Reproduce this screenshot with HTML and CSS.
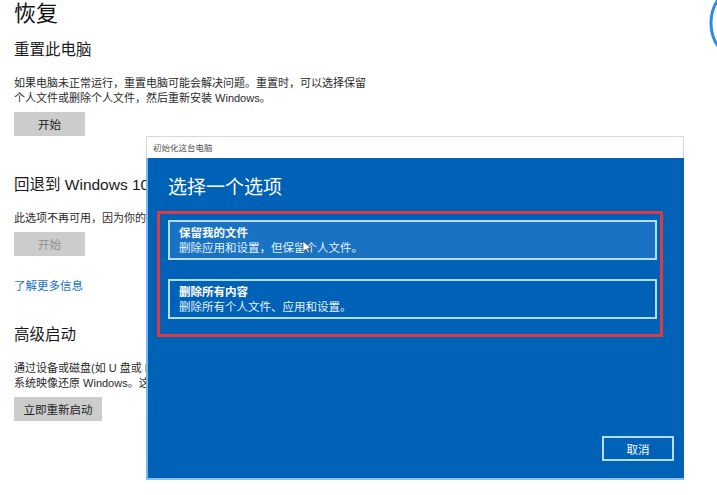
FILE: index.html
```html
<!DOCTYPE html>
<html>
	<head>
		<meta charset="utf-8">
		<title>恢复</title>

		<link rel="stylesheet" href="styles.css">
	</head>
	<body>
		<div class="page">
			<h1 class="title">恢复</h1>

			<h2 class="heading first">重置此电脑</h2>
			<p class="desc">如果电脑未正常运行，重置电脑可能会解决问题。重置时，可以选择保留<br>个人文件或删除个人文件，然后重新安装 Windows。</p>
			<button class="btn">开始</button>

			<h2 class="heading back">回退到 Windows 10</h2>
			<p class="desc">此选项不再可用，因为你的电脑升级时间已超过 10 天。</p>
			<button class="btn disabled">开始</button>

			<a class="more" href="#">了解更多信息</a>

			<h2 class="heading adv">高级启动</h2>
			<p class="desc">通过设备或磁盘(如 U 盘或 DVD)启动，更改 Windows 启动设置，或者从<br>系统映像还原 Windows。这将重新启动电脑。</p>
			<button class="btn wide">立即重新启动</button>
		</div>

		<svg class="ring" width="12" height="50" viewBox="705 0 12 50">
			<circle cx="753" cy="23" r="42" fill="none" stroke="#2d8be0" stroke-width="3"/>
		</svg>

		<div class="dialog">
			<div class="caption">初始化这台电脑</div>
			<div class="body">
				<h3 class="choose">选择一个选项</h3>
				<div class="mark">
					<div class="option hover">
						<div class="opt-title">保留我的文件</div>
						<div class="opt-sub">删除应用和设置，但保留个人文件。</div>
					</div>
					<div class="option">
						<div class="opt-title">删除所有内容</div>
						<div class="opt-sub">删除所有个人文件、应用和设置。</div>
					</div>
				</div>
				<div class="actions">
					<button class="cancel">取消</button>
				</div>
			</div>
		</div>

		<svg class="cursor" width="9" height="14" viewBox="0 0 9 14">
			<polygon points="1,1 1,12 4,9 6,13 7.5,12.3 5.6,8.6 9,8.6" fill="#fff" stroke="#333" stroke-width="0.6"/>
		</svg>
	</body>
</html>
```

FILE: styles.css
```css
* {
	margin: 0;
	padding: 0;
	box-sizing: border-box;
}

body {
	width: 717px;
	height: 495px;
	overflow: hidden;
	background: #ffffff;
	font-family: "Liberation Sans", "Noto Sans CJK SC", sans-serif;
	color: #222222;
	position: relative;
}

.page {
	padding: 2px 0 0 14px;
	display: flex;
	flex-direction: column;
	align-items: flex-start;
}

.title {
	font-size: 22px;
	font-weight: 400;
	line-height: 24px;
	color: #111111;
}

.heading {
	font-size: 15.5px;
	font-weight: 400;
	line-height: 20px;
	color: #1a1a1a;
	white-space: nowrap;
}

.heading.first {
	margin-top: 14px;
}

.heading.back {
	margin-top: 39px;
}

.heading.adv {
	margin-top: 31px;
}

.desc {
	margin-top: 16px;
	font-size: 11px;
	line-height: 15px;
	color: #2a2a2a;
	white-space: nowrap;
}

.btn {
	margin-top: 6px;
	width: 71px;
	height: 24px;
	border: none;
	background: #cccccc;
	font-family: "Noto Sans CJK SC", sans-serif;
	font-size: 11.5px;
	color: #222222;
}

.btn.disabled {
	color: #8f8f8f;
}

.btn.wide {
	width: 88px;
}

.more {
	margin-top: 23px;
	font-size: 11.5px;
	line-height: 15px;
	color: #1a73c8;
	text-decoration: none;
}

.ring {
	position: absolute;
	top: 0;
	right: 0;
}

/* dialog on top of the settings page */
.dialog {
	position: absolute;
	left: 146px;
	top: 136px;
	width: 538px;
}

.caption {
	height: 22px;
	background: #ffffff;
	border: 1px solid #d8d8d8;
	border-bottom: none;
	font-family: "Noto Sans CJK SC", sans-serif;
	font-size: 8.5px;
	line-height: 21px;
	padding-left: 6px;
	color: #555555;
}

.body {
	height: 322px;
	background: #0062b6;
	border-left: 2px solid #7db6e8;
	border-bottom: 2px solid #8cc0ee;
	display: flex;
	flex-direction: column;
	padding-top: 16px;
}

.choose {
	font-family: "Noto Sans CJK SC", sans-serif;
	font-size: 19px;
	font-weight: 400;
	line-height: 24px;
	color: #ffffff;
	margin-left: 20px;
}

.mark {
	margin-top: 13px;
	margin-left: 9px;
	width: 506px;
	height: 126px;
	border: 3px solid #dc3a44;
	padding: 6px 0 0 8px;
	display: flex;
	flex-direction: column;
	gap: 19px;
}

.option {
	width: 489px;
	height: 40px;
	border: 2px solid #b5dcf8;
	padding: 3px 0 0 9px;
	color: #ffffff;
	font-family: "Noto Sans CJK SC", sans-serif;
	font-size: 11.5px;
	line-height: 15px;
}

.option.hover {
	background: #1a73c2;
}

.opt-title {
	font-weight: 700;
}

.opt-sub {
	color: #e6f2ff;
}

.actions {
	margin-top: auto;
	margin-bottom: 17px;
	display: flex;
	justify-content: flex-end;
	padding-right: 10px;
}

.cancel {
	width: 72px;
	height: 25px;
	background: transparent;
	border: 2px solid #b5dcf8;
	color: #ffffff;
	font-family: "Noto Sans CJK SC", sans-serif;
	font-size: 11.5px;
}

.cursor {
	position: absolute;
	left: 302px;
	top: 240px;
}
```
